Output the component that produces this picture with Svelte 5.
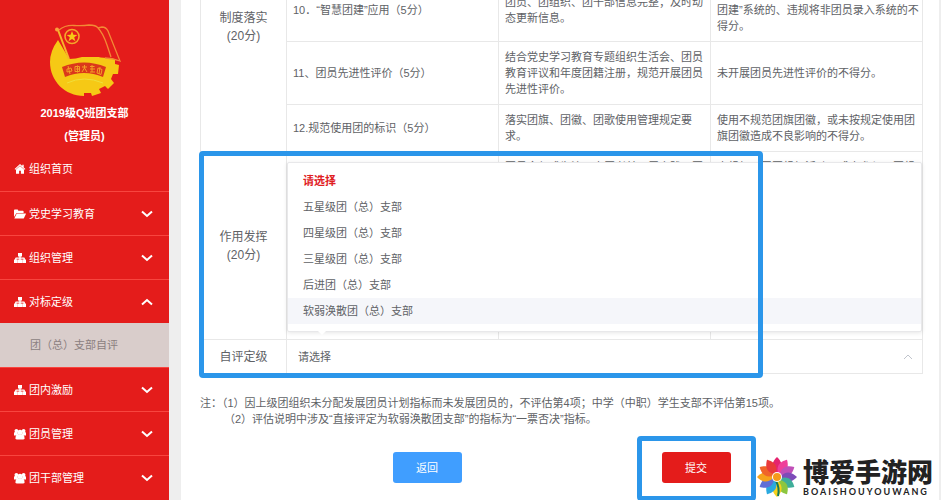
<script lang="ts">
  interface MenuItem {
    label: string;
    icon: 'home' | 'folder' | 'tree' | 'users';
    open?: boolean;
    children?: string[];
  }

  const menu: MenuItem[] = [
    { label: '党史学习教育', icon: 'folder' },
    { label: '组织管理', icon: 'tree' },
    { label: '对标定级', icon: 'tree', open: true, children: ['团（总）支部自评'] },
    { label: '团内激励', icon: 'tree' },
    { label: '团员管理', icon: 'users' },
    { label: '团干部管理', icon: 'users' }
  ];

  const options = [
    '请选择',
    '五星级团（总）支部',
    '四星级团（总）支部',
    '三星级团（总）支部',
    '后进团（总）支部',
    '软弱涣散团（总）支部'
  ];

  // clockwise from the top petal
  const petals = [
    '#e5246f', '#ef3f9a', '#c04fb8', '#7d4bb8', '#3fae9a', '#8cc63f',
    '#f6d21c', '#2aa9e0', '#5f6fd6', '#f6a21c', '#f0642a', '#e93a3a'
  ];

  let level = $state('请选择');
  let hovered = $state('软弱涣散团（总）支部');
</script>

{#snippet icon(name: string)}
  <svg class="icon" viewBox="0 0 12 12" aria-hidden="true">
    {#if name === 'home'}
      <path d="M6 1 0.6 6l.7.8L6 2.6l4.7 4.2.7-.8-1.7-1.6V1.7H8.3v1.4z" />
      <path d="M6 3 2 6.6v4.200h3.1V7.800h1.800v3h3.1V6.600z" />
    {:else if name === 'folder'}
      <path d="M0 9V2.4q0-.8.8-.8h2.6q.8 0 .8.8v.3h4.6q.8 0 .8.8V5H3.3Q2.6 5 2.2 5.6z" />
      <path d="M.3 10.4 2.500 6q.3-.5.8-.5h8.300q.6 0 .3.6L10 9.900q-.3.5-.8.5z" />
    {:else if name === 'tree'}
      <path
        d="M4 1h4v3.500H6.700v1h3.200q1 0 1 1v1.100H12V11H8.200V7.600h1.300V6.700H6.700v.9H8V11H4V7.600h1.300v-.9H2.500v.9h1.300V11H0V7.600h1.100V6.500q0-1 1-1h3.200v-1H4z"
      />
    {:else}
      <circle cx="2.4" cy="2.8" r="1.9" />
      <circle cx="9.6" cy="2.8" r="1.9" />
      <circle cx="6" cy="4.2" r="2.500" />
      <path d="M0 7.500V5.300Q0 4 1.200 4h2.200l1 3.500zM12 7.500V5.300Q12 4 10.800 4H8.600l-1 3.500z" />
      <path d="M1.500 10.200q0-3.700 2.500-4h4q2.500.3 2.500 4 0 1.400-1.500 1.400H3q-1.500 0-1.500-1.400z" />
    {/if}
  </svg>
{/snippet}

{#snippet chevron(up: boolean)}
  <svg class="chevron" viewBox="0 0 12 8" aria-hidden="true">
    <path d={up ? 'M1 6.500 6 2l5 4.500' : 'M1 1.500 6 6l5-4.500'} />
  </svg>
{/snippet}

<div class="page">
  <aside class="sidebar">
    <header class="branch">
      <svg class="emblem" viewBox="0 0 76 78" aria-hidden="true">
        <path
          d="M11 20Q3 31 3 42c0 19 15 34 34 34l0-3 7 0 1 3 9-3-2-4 6-3 3 3 6-6-3-4 2-5 5 0 1-9-4-1V37H21z"
          fill="#f6c915"
        />
        <path
          d="M12 9Q18 5 27 5.500T42 5q7 0 9 3l4-1q4 0 6 4l12 30q-7-3-13-3t-13-2q-6-1-12 1t-13 2z"
          fill="#e41c1b"
        />
        <path
          d="M12 10Q18 5 27 5.500T42 5q7 0 9 3l4-1q4 0 6 4l12 30q-8-3-15-3M51 8q5 5 9 17l4 12"
          fill="none"
          stroke="#f28a35"
          stroke-width="1.300"
        />
        <path d="M11 10l11 29" stroke="#f6b52a" stroke-width="2" />
        <circle cx="10" cy="9.500" r="2" fill="#f9a23c" />
        <circle cx="25" cy="16.500" r="7" fill="#e41c1b" stroke="#f5a52b" stroke-width="1.600" />
        <path
          d="m25 11 1.400 3.800 4 .1-3.200 2.400 1.200 3.900-3.400-2.300-3.400 2.300 1.200-3.900-3.200-2.400 4-.1z"
          fill="#f6c915"
        />
        <path d="M15 47q22-9 44 0l-3 10q-19-8-38 0z" fill="#db381b" />
        <g fill="none" stroke="#f3a025" stroke-width="1">
          <path d="M20 49l4-1 1 3-5 1zM21 46l2 8M28 46.500h4.500v5H28zM29 49h3M30.500 45.500v7" />
          <path d="M35 47h5M37.500 45v3l-2.500 4M37.500 48l2.500 4M43 46.500h4.500M43 49h5M45 45v7M43 52h5" />
          <path d="M51 48l4 1.500-1 5-4-1.500zM53 47l-1 7" />
        </g>
        <path d="M20 63q17-8 36 0" fill="none" stroke="#efdf3b" stroke-width="1" />
      </svg>
      <strong>2019级Q班团支部</strong>
      <strong>(管理员)</strong>
    </header>

    <nav>
      <a class="item home" href="#home">{@render icon('home')}<span>组织首页</span></a>
      {#each menu as item}
        <button class="item" type="button" aria-expanded={item.open ?? false}>
          {@render icon(item.icon)}
          <span>{item.label}</span>
          {@render chevron(item.open ?? false)}
        </button>
        {#each item.children ?? [] as child}
          <a class="sub" href="#self-review">{child}</a>
        {/each}
      {/each}
    </nav>
  </aside>

  <main class="panel">
    <div class="review">
      <table>
        <colgroup>
          <col class="group-col" />
          <col />
          <col />
          <col />
        </colgroup>
        <tbody>
          <tr>
            <th class="continued" rowspan="3">制度落实<br />(20分)</th>
            <td>10．“智慧团建”应用（5分）</td>
            <td>团员、团组织、团干部信息完整；及时动态更新信息。</td>
            <td>未按要求使用“智慧<br />团建”系统的、违规将非团员录入系统的不得分。</td>
          </tr>
          <tr>
            <td>11、团员先进性评价（5分）</td>
            <td>结合党史学习教育专题组织生活会、团员教育评议和年度团籍注册，规范开展团员先进性评价。</td>
            <td>未开展团员先进性评价的不得分。</td>
          </tr>
          <tr>
            <td>12.规范使用团的标识（5分）</td>
            <td>落实团旗、团徽、团歌使用管理规定要求。</td>
            <td>使用不规范团旗团徽，或未按规定使用团旗团徽造成不良影响的不得分。</td>
          </tr>
          <tr class="effect">
            <th>作用发挥<br />(20分)</th>
            <td></td>
            <td>团员全部成为注册志愿者并开展实践、团员</td>
            <td>未组织开展团组织活动、或未参与、团组织</td>
          </tr>
          <tr class="level">
            <th><label for="level">自评定级</label></th>
            <td class="level-cell" colspan="3">
              <div class="field">
                <select id="level" bind:value={level}>
                  {#each options as option}
                    <option>{option}</option>
                  {/each}
                </select>
                <svg class="caret" viewBox="0 0 10 6" aria-hidden="true"><path d="M1 5l4-4 4 4" /></svg>
                <div class="popup" role="listbox" aria-label="自评定级">
                  {#each options as option}
                    <button
                      type="button"
                      role="option"
                      aria-selected={option === level}
                      class:selected={option === level}
                      class:hovered={option === hovered}
                      onmouseenter={() => (hovered = option)}
                      onclick={() => (level = option)}
                    >
                      {option}
                    </button>
                  {/each}
                </div>
              </div>
            </td>
          </tr>
        </tbody>
      </table>
      <div class="mark mark-table"></div>
    </div>

    <div class="notes">
      <p>注：（1）因上级团组织未分配发展团员计划指标而未发展团员的，不评估第4项；中学（中职）学生支部不评估第15项。</p>
      <p class="second">（2）评估说明中涉及“直接评定为软弱涣散团支部”的指标为“一票否决”指标。</p>
    </div>

    <div class="actions">
      <button class="btn" type="button">返回</button>
      <div class="submit">
        <button class="btn danger" type="button">提交</button>
        <div class="mark mark-submit"></div>
      </div>
    </div>
  </main>

  <div class="watermark">
    <svg viewBox="-20 -20 40 40" aria-hidden="true">
      {#each petals as color, i}
        <path d="M0-3C-8-10-4-16 0-20 4-16 8-10 0-3z" fill={color} transform="rotate({i * 30})" />
      {/each}
      <path d="M-1 4q4 7 2 15" fill="none" stroke="#16785c" stroke-width="2" />
      <circle r="5" fill="#fff" />
      <circle r="4" fill="#f59a1b" />
    </svg>
    <div class="site">
      <span class="site-name">博爱手游网</span>
      <span class="site-latin">BOAISHOUYOUWANG</span>
    </div>
  </div>
</div>

<style>
  :global(body) {
    margin: 0;
    background: #eeeeee;
  }

  .page {
    position: relative;
    display: flex;
    height: 100vh;
    overflow: hidden;
    font-family: 'Liberation Sans', 'Noto Sans CJK SC', sans-serif;
    font-size: 11px;
    line-height: 16px;
    color: #606266;
  }

  button,
  select {
    font: inherit;
    color: inherit;
    border: 0;
    margin: 0;
    background: none;
    cursor: pointer;
  }

  a {
    text-decoration: none;
  }

  .sidebar {
    flex: none;
    width: 169px;
    background: #e41c1b;
    color: #fff;
  }

  .branch {
    display: flex;
    flex-direction: column;
    align-items: center;
    gap: 7px;
    height: 127px;
    padding-top: 20px;
  }

  .emblem {
    width: 76px;
    height: 78px;
  }

  .item {
    box-sizing: border-box;
    display: flex;
    align-items: center;
    gap: 3px;
    width: 100%;
    height: 44px;
    padding: 0 16px 0 14px;
    border-top: 1px solid #f8453f;
    color: #fff;
    text-align: left;
  }

  .item.home {
    border-top: 0;
  }

  .icon {
    width: 12px;
    height: 12px;
    fill: #fff;
  }

  .chevron {
    width: 12px;
    height: 8px;
    margin-left: auto;
    fill: none;
    stroke: #fff;
    stroke-width: 2;
  }

  .sub {
    display: block;
    padding: 14px 0 14px 30px;
    background: #d9cdcb;
    color: #8b7f7f;
  }

  .panel {
    flex: 1;
    min-width: 0;
    margin: 0 2px 0 12px;
    padding: 0 16px 0 19px;
    background: #fff;
  }

  .review {
    position: relative;
    margin-top: -22px;
  }

  table {
    width: 100%;
    table-layout: fixed;
    border-collapse: collapse;
  }

  .group-col {
    width: 86px;
  }

  th,
  td {
    padding: 7px 2px 7px 6px;
    border: 1px solid #e8e8e8;
    text-align: left;
  }

  th {
    padding: 7px 0;
    font-size: 12px;
    font-weight: 400;
    line-height: 18px;
    text-align: center;
  }

  .continued {
    padding-top: 30px;
    vertical-align: top;
  }

  .effect {
    height: 188px;
  }

  .effect td {
    vertical-align: top;
  }

  .level {
    height: 34px;
  }

  .level .level-cell {
    padding: 0;
  }

  .field {
    position: relative;
    display: flex;
    align-items: center;
  }

  select {
    flex: 1;
    height: 32px;
    padding: 0 11px;
    appearance: none;
  }

  .caret {
    position: absolute;
    right: 9px;
    width: 10px;
    height: 6px;
    fill: none;
    stroke: #c0c4cc;
    pointer-events: none;
  }

  .popup {
    position: absolute;
    right: 0;
    bottom: 41px;
    left: 0;
    padding: 5px 0 7px;
    border: 1px solid #e8e8ea;
    border-radius: 2px;
    background: #fff;
    box-shadow: 0 1px 4px rgba(0, 0, 0, 0.1);
  }

  .popup::after {
    content: '';
    position: absolute;
    bottom: -4px;
    left: 30px;
    border: 4px solid transparent;
    border-top-color: #fff;
    border-bottom: 0;
  }

  .popup button {
    display: block;
    width: 100%;
    height: 26px;
    padding: 0 15px;
    text-align: left;
  }

  .popup .hovered {
    background: #f5f6fa;
  }

  .popup .selected {
    color: #e0201f;
    font-weight: 700;
  }

  .mark {
    position: absolute;
    border: 5px solid #2b96ea;
    border-radius: 4px;
    pointer-events: none;
  }

  .mark-table {
    top: 173px;
    right: 160px;
    bottom: -4px;
    left: -1px;
  }

  .notes {
    margin-top: 21px;
  }

  .notes p {
    margin: 0;
  }

  .notes .second {
    padding-left: 24px;
  }

  .actions {
    display: flex;
    justify-content: center;
    gap: 200px;
    margin-top: 25px;
  }

  .submit {
    position: relative;
  }

  .btn {
    width: 69px;
    height: 31px;
    border-radius: 3px;
    background: #409eff;
    color: #fff;
  }

  .danger {
    background: #e41c1b;
  }

  .mark-submit {
    inset: -16px -25px -18px;
  }

  .watermark {
    position: absolute;
    right: 8px;
    bottom: 2px;
    display: flex;
    align-items: center;
    gap: 6px;
    color: #222;
  }

  .watermark svg {
    width: 40px;
    height: 42px;
  }

  .site {
    display: flex;
    flex-direction: column;
  }

  .site-name {
    font-family: 'Noto Sans CJK SC', sans-serif;
    font-size: 26px;
    font-weight: 900;
    line-height: 30px;
  }

  .site-latin {
    font-family: Lato, sans-serif;
    font-size: 9px;
    font-weight: 700;
    line-height: 12px;
    letter-spacing: 2px;
  }
</style>
